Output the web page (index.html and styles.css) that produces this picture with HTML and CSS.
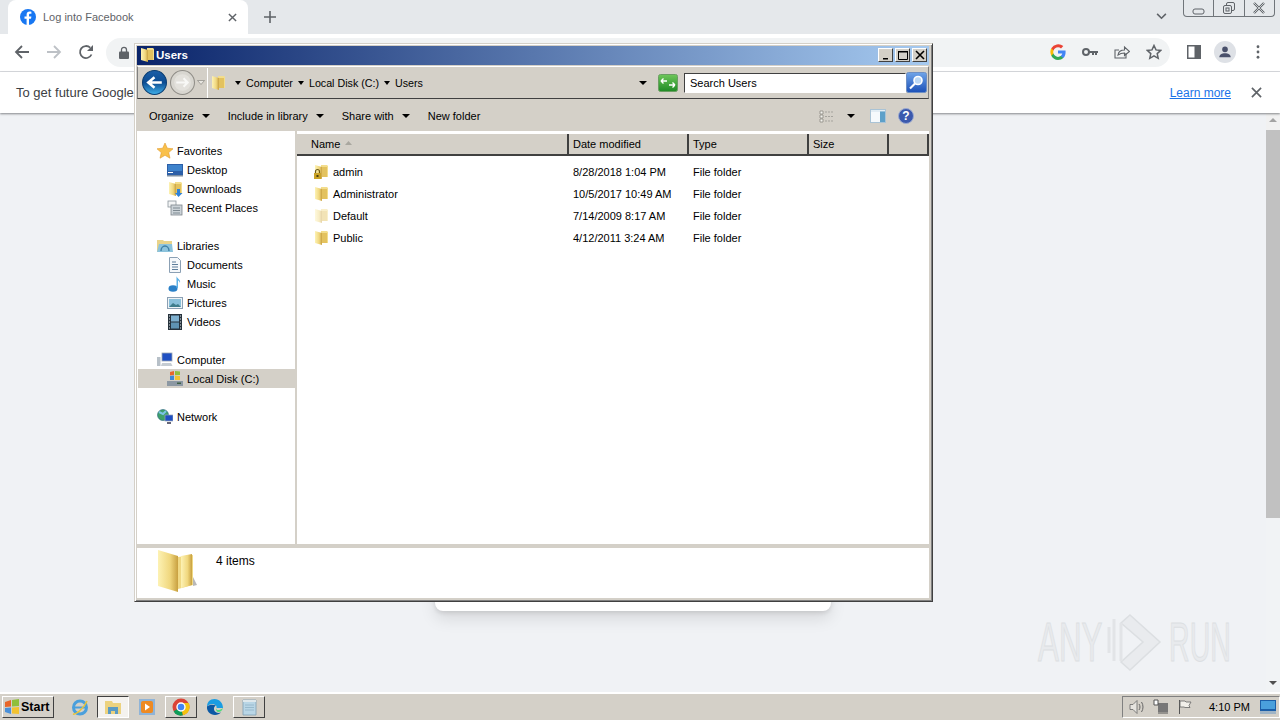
FILE: index.html
```html
<!DOCTYPE html>
<html lang="en">
<head>
    <meta charset="UTF-8">
    <title>Log into Facebook</title>
    <link rel="stylesheet" href="styles.css">
</head>
<body>
    <svg class="sprite" width="0" height="0">
        <defs>
            <linearGradient id="gFolder" x1="0" y1="0" x2="1" y2="0">
                <stop offset="0" stop-color="#fdf2b4"/>
                <stop offset="0.6" stop-color="#f0d77e"/>
                <stop offset="1" stop-color="#c8a040"/>
            </linearGradient>
            <linearGradient id="gTitle" x1="0" y1="0" x2="0" y2="1">
                <stop offset="0" stop-color="#1c5fa8"/>
                <stop offset="0.5" stop-color="#0c4c92"/>
                <stop offset="1" stop-color="#3fb0ea"/>
            </linearGradient>
            <linearGradient id="gGreen" x1="0" y1="0" x2="0" y2="1">
                <stop offset="0" stop-color="#6fc75a"/>
                <stop offset="1" stop-color="#1f8a25"/>
            </linearGradient>
            <linearGradient id="gSearch" x1="0" y1="0" x2="0" y2="1">
                <stop offset="0" stop-color="#6fa4e8"/>
                <stop offset="1" stop-color="#1b50b8"/>
            </linearGradient>
            <symbol id="folder" viewBox="0 0 16 16">
                <path d="M8 1h6l1 1v11H8z" fill="#f3dd8c"/>
                <path d="M9 3h5v10H9z" fill="#e3c25f"/>
                <path d="M2 1l7 2v12l-7-2z" fill="url(#gFolder)"/>
            </symbol>
            <symbol id="star" viewBox="0 0 16 16">
                <path d="M8 0l2.300 5.200 5.700.6-4.300 3.800 1.300 5.600L8 12.300 3 15.200l1.300-5.600L0 5.800l5.700-.6z" fill="#f9c04a" stroke="#e09a2c" stroke-width=".6"/>
            </symbol>
        </defs>
    </svg>

    <div class="browser">
        <div class="tabstrip">
            <div class="tab">
                <svg class="tab-fav" viewBox="0 0 16 16"><circle cx="8" cy="8" r="8" fill="#1877f2"/><path d="M9 16V9.800h2l.4-2.400H9V6c0-.8.3-1.200 1.200-1.200h1.200V2.700c-.4 0-1-.1-1.700-.1-1.900 0-3.100 1.100-3.100 3.200v1.600H4.500v2.400h2.100V16z" fill="#fff"/></svg>
                <span class="tab-title">Log into Facebook</span>
                <svg class="tab-close" viewBox="0 0 10 10"><path d="M1 1l8 8M9 1L1 9" stroke="#5f6368" stroke-width="1.600"/></svg>
            </div>
            <svg class="new-tab" viewBox="0 0 12 12"><path d="M6 0v12M0 6h12" stroke="#5f6368" stroke-width="1.600"/></svg>
            <svg class="tab-search" viewBox="0 0 12 8"><path d="M1 1l5 5 5-5" fill="none" stroke="#5f6368" stroke-width="1.800"/></svg>
            <div class="caption">
                <div class="caption-btn cap-min"><svg viewBox="0 0 14 8"><rect x="1" y="2" width="11" height="5" rx="2" fill="none" stroke="#5f6368"/></svg></div>
                <div class="caption-btn cap-max"><svg viewBox="0 0 14 14"><rect x="4.500" y="1.500" width="8" height="8" rx="1.500" fill="none" stroke="#5f6368"/><rect x="1.500" y="4.500" width="8" height="8" rx="1.500" fill="#e5e8eb" stroke="#5f6368"/><rect x="4" y="7" width="3" height="3" fill="none" stroke="#5f6368"/></svg></div>
                <div class="caption-btn"><svg viewBox="0 0 14 12"><path d="M2 1l10 10M12 1L2 11" stroke="#5f6368" stroke-width="2.400"/><path d="M2 1l10 10M12 1L2 11" stroke="#e5e8eb" stroke-width=".8"/></svg></div>
            </div>
        </div>

        <div class="toolbar">
            <svg class="nav-icon" viewBox="0 0 16 16"><path d="M15 8H2M8 2L2 8l6 6" fill="none" stroke="#5f6368" stroke-width="1.800"/></svg>
            <svg class="nav-icon" viewBox="0 0 16 16"><path d="M1 8h13M8 2l6 6-6 6" fill="none" stroke="#bdc1c6" stroke-width="1.800"/></svg>
            <svg class="nav-icon" viewBox="0 0 16 16"><path d="M13.500 10.500A6 6 0 1 1 12.200 3.700" fill="none" stroke="#5f6368" stroke-width="1.800"/><path d="M15 1v6H9z" fill="#5f6368"/></svg>
            <div class="omnibox">
                <svg class="lock" viewBox="0 0 10 13"><path d="M2.500 6V3.800a2.500 2.500 0 0 1 5 0V6" fill="none" stroke="#5f6368" stroke-width="1.300"/><rect y="5.500" width="10" height="7.500" rx="1" fill="#5f6368"/></svg>
                <div class="omni-actions">
                    <svg class="omni-icon" viewBox="0 0 16 16"><path d="M15.600 8.200c0-.6 0-1.100-.1-1.600H8v3h4.300a3.700 3.700 0 0 1-1.600 2.400v2h2.600c1.500-1.400 2.300-3.400 2.300-5.800z" fill="#4285f4"/><path d="M8 16c2.200 0 4-.7 5.300-1.900l-2.600-2c-.7.500-1.600.8-2.700.8-2.100 0-3.900-1.400-4.500-3.300H1.300v2.100A8 8 0 0 0 8 16z" fill="#34a853"/><path d="M3.500 9.600a4.800 4.800 0 0 1 0-3.100V4.300H1.300a8 8 0 0 0 0 7.400z" fill="#fbbc05"/><path d="M8 3.200c1.200 0 2.200.4 3 1.200l2.300-2.300A8 8 0 0 0 1.300 4.300l2.200 2.200C4.100 4.600 5.900 3.200 8 3.200z" fill="#ea4335"/></svg>
                    <svg class="omni-icon" viewBox="0 0 16 16"><circle cx="4" cy="8" r="3" fill="none" stroke="#5f6368" stroke-width="2"/><path d="M7 7h9v2h-1v2h-2V9h-1v2h-2V9H7z" fill="#5f6368"/></svg>
                    <svg class="omni-icon" viewBox="0 0 16 16"><path d="M12 9v5H1V6h4" fill="none" stroke="#5f6368" stroke-width="1.100"/><path d="M4 11c.5-3.500 3-5 6.500-5V3l5 4.500-5 4V9C8 9 6 9.500 4 11z" fill="none" stroke="#5f6368" stroke-width="1.100"/></svg>
                    <svg class="omni-icon" viewBox="0 0 16 16"><path d="M8 1.500l2 4.400 4.800.5-3.600 3.200 1 4.700L8 11.900l-4.200 2.400 1-4.700-3.600-3.200 4.800-.5z" fill="none" stroke="#5f6368" stroke-width="1.500"/></svg>
                </div>
            </div>
            <svg class="side-icon" viewBox="0 0 14 14"><path d="M0 0h14v14H0z" fill="#5f6368"/><path d="M1.500 1.500h6v11h-6z" fill="#fff"/></svg>
            <div class="avatar"><svg viewBox="0 0 16 16"><circle cx="8" cy="5" r="3.200" fill="#49506b"/><path d="M1.500 14c0-3 3-4.500 6.500-4.500s6.500 1.500 6.500 4.500z" fill="#49506b"/></svg></div>
            <svg class="menu-dots" viewBox="0 0 4 16"><circle cx="2" cy="2" r="1.600" fill="#5f6368"/><circle cx="2" cy="8" r="1.600" fill="#5f6368"/><circle cx="2" cy="14" r="1.600" fill="#5f6368"/></svg>
        </div>

        <div class="infobar">
            <span class="info-text">To get future Google</span>
            <a class="learn-more" href="#">Learn more</a>
            <svg class="info-close" viewBox="0 0 12 12"><path d="M1 1l10 10M11 1L1 11" stroke="#5f6368" stroke-width="1.800"/></svg>
        </div>

        <div class="page">
            <div class="page-main">
                <div class="login-card"></div>
            </div>
            <div class="scrollbar">
                <div class="scroll-up"></div>
                <div class="scroll-thumb"></div>
                <div class="scroll-down"></div>
            </div>
            <div class="watermark">
                <span class="wm-text">ANY</span>
                <svg class="wm-logo" viewBox="0 0 58 62"><path d="M8 8v42M3 16v26" fill="none" stroke="#e2e4e7" stroke-width="3"/><path d="M24 4l30 27-30 28-9-8 22-20-22-19z" fill="#e9ebee" stroke="#dcdfe2" stroke-width="1.500"/><path d="M15 12v38" stroke="#e2e4e7" stroke-width="3"/></svg>
                <span class="wm-text wm-run">RUN</span>
            </div>
        </div>
    </div>

    <div class="taskbar">
        <div class="start-btn">
            <svg class="start-logo" viewBox="0 0 16 16"><path d="M1 3l6-2v6.500L1 8z" fill="#e8662a"/><path d="M8 1l7-1v7l-7 .500z" fill="#8fbf3c"/><path d="M1 9l6-.5V15l-6-2z" fill="#4a90d9"/><path d="M8 8.500l7-.5v7l-7-.500z" fill="#f2c230"/></svg>
            <span>Start</span>
        </div>
        <svg class="task-icon ie" viewBox="0 0 18 18"><ellipse cx="9" cy="9.500" rx="6.500" ry="6.500" fill="none" stroke="#4a9fdc" stroke-width="3"/><path d="M3 9.500h12" stroke="#4a9fdc" stroke-width="2"/><path d="M2 16c3 1 11-6 14-13" fill="none" stroke="#e8c43a" stroke-width="1.600"/></svg>
        <div class="task-btn task-active">
            <svg class="task-icon" viewBox="0 0 18 18"><path d="M1 3h7l1 2h8v11H1z" fill="#ecd27e"/><path d="M4 9h10v7H11v-3H7v3H4z" fill="#5b9bc4"/></svg>
        </div>
        <svg class="task-icon wmp" viewBox="0 0 18 18"><rect x="1" y="1" width="16" height="16" fill="#8fb4d8"/><rect x="3" y="3" width="12" height="12" rx="2" fill="#ee8a22"/><path d="M7 5.500l5 3.500-5 3.500z" fill="#fff"/></svg>
        <div class="task-btn">
            <svg class="task-icon" viewBox="0 0 18 18"><circle cx="9" cy="9" r="8.500" fill="#db4437"/><path d="M9 9L1.600 13.300A8.500 8.500 0 0 0 11 17.300z" fill="#0f9d58"/><path d="M9 5h7.600a8.500 8.500 0 0 1-5.600 12.300L9 9z" fill="#f4c20d"/><circle cx="9" cy="9" r="4" fill="#4285f4" stroke="#fff" stroke-width="1.400"/></svg>
        </div>
        <svg class="task-icon edge" viewBox="0 0 18 18"><path d="M17 10c0-5-3.500-9-8.500-9C4 1 1 4 1 8.500c2-3 7-3.500 9-1 1 1.300.5 2.500.5 2.500z" fill="#1b9de2"/><path d="M1 8.500C.5 13 4 17 9 17c2.500 0 4.500-1 6-2.500-3 1-6.500 0-7-3-.3-2 .7-3.500 2-4-2.500-1.500-7-1-9 1z" fill="#0c59a4"/><path d="M10.500 10c-.5 2 2 3.500 6.500 0-1 3-3 4-4.500 4-2 0-3-2-2-4z" fill="#4fdb7a"/></svg>
        <div class="task-btn">
            <svg class="task-icon" viewBox="0 0 18 18"><path d="M3 2h13v15H3z" fill="#b9d6e6" stroke="#7d9fb3" stroke-width=".8"/><path d="M3 2h13v2H3z" fill="#dfe8ec"/><path d="M5 7h9M5 9.500h9M5 12h9" stroke="#8fb2c6" stroke-width=".8"/></svg>
        </div>
        <div class="tray">
            <svg class="tray-icon" viewBox="0 0 16 16"><path d="M1 5.500h3l4-4v13l-4-4H1z" fill="#e6e4df" stroke="#666" stroke-width=".8"/><path d="M10 5c1.300 2 1.300 4 0 6M12.500 3c2 3 2 7 0 10" fill="none" stroke="#666"/></svg>
            <svg class="tray-icon" viewBox="0 0 16 16"><rect x="5" y="4" width="10" height="9" fill="#777"/><path d="M1 1h4v5H1zM5 14h10" fill="#fff" stroke="#555"/></svg>
            <svg class="tray-icon" viewBox="0 0 16 16"><path d="M2.500 1v14" stroke="#555"/><path d="M3 2h5l1 1h5l-2 3.500 1 2H8L7 8H3z" fill="#f2f0ea" stroke="#666" stroke-width=".8"/></svg>
            <span class="clock">4:10 PM</span>
            <svg class="show-desktop" viewBox="0 0 16 14"><rect width="16" height="14" fill="#1c5fa8"/><rect x="1" y="1" width="14" height="8" fill="#4aa0dc"/><rect y="11" width="16" height="3" fill="#9fb4c6"/></svg>
        </div>
    </div>

    <div class="explorer">
        <div class="title-bar">
            <svg class="ico16" viewBox="0 0 16 16"><use href="#folder"/></svg>
            <span class="title-text">Users</span>
            <div class="win-btns">
                <div class="win-btn"><svg viewBox="0 0 10 10"><path d="M2 8h5v1.500H2z" fill="#000"/></svg></div>
                <div class="win-btn"><svg viewBox="0 0 10 10"><path d="M.5 1.500h9v8h-9z" fill="none" stroke="#000"/><path d="M0 1h10v1.500H0z" fill="#000"/></svg></div>
                <div class="win-btn win-close"><svg viewBox="0 0 10 10"><path d="M1 1l8 8M9 1L1 9" stroke="#000" stroke-width="1.600"/></svg></div>
            </div>
        </div>

        <div class="address-band">
            <svg class="round-btn" viewBox="0 0 24 24"><circle cx="12" cy="12" r="11.500" fill="url(#gTitle)" stroke="#0d3f73"/><path d="M19 12H8M12 7l-6 5 6 5" fill="none" stroke="#fff" stroke-width="2.400"/></svg>
            <svg class="round-btn fwd" viewBox="0 0 24 24"><circle cx="12" cy="12" r="11.500" fill="#d8d6d0" stroke="#8f8d87"/><circle cx="12" cy="12" r="8" fill="#e3e1dc"/><path d="M6 12h10M13 8l4 4-4 4" fill="none" stroke="#f8f8f6" stroke-width="2"/></svg>
            <svg class="hist-arrow" viewBox="0 0 8 5"><path d="M.5.500h7L4 4.500z" fill="#e8e6e1" stroke="#8a8882" stroke-width=".7"/></svg>
            <div class="address-box">
                <svg class="ico16" viewBox="0 0 16 16"><use href="#folder"/></svg>
                <span class="crumb-arrow"></span><span class="crumb">Computer</span>
                <span class="crumb-arrow"></span><span class="crumb">Local Disk (C:)</span>
                <span class="crumb-arrow"></span><span class="crumb">Users</span>
                <span class="drop-arrow address-drop"></span>
            </div>
            <svg class="refresh" viewBox="0 0 20 18"><rect x=".5" y=".5" width="19" height="17" rx="2" fill="url(#gGreen)" stroke="#6a9e62"/><path d="M3 7h6M3 7l2.500-2.500M3 7l2.500 2.500M17 11h-6M17 11l-2.500-2.500M17 11l-2.500 2.500" fill="none" stroke="#fff" stroke-width="1.400"/></svg>
            <div class="search-box">Search Users</div>
            <svg class="search-btn" viewBox="0 0 21 21"><rect x=".5" y=".5" width="20" height="20" rx="2" fill="url(#gSearch)" stroke="#6d8fc4"/><circle cx="12" cy="8.500" r="4" fill="#bcd8f5" stroke="#fff" stroke-width="1.600"/><path d="M9 11.500l-5 5" stroke="#fff" stroke-width="2.200"/></svg>
        </div>

        <div class="command-bar">
            <span class="cmd cmd-organize">Organize</span><span class="drop-arrow cmd-arrow"></span>
            <span class="cmd">Include in library</span><span class="drop-arrow cmd-arrow"></span>
            <span class="cmd">Share with</span><span class="drop-arrow cmd-arrow"></span>
            <span class="cmd">New folder</span>
            <div class="cmd-right">
                <svg class="view-icon" viewBox="0 0 16 13"><path d="M1 1h3v3H1zM1 5h3v3H1zM1 9h3v3H1z" fill="#f4f3ef" stroke="#8a8882" stroke-width=".8"/><path d="M6 2h9M6 6.500h9M6 11h9" stroke="#a5a39d" stroke-dasharray="2 1"/></svg>
                <span class="drop-arrow view-arrow"></span>
                <svg class="pane-icon" viewBox="0 0 16 14"><rect x=".5" y=".5" width="15" height="13" fill="#f5f9fc" stroke="#a9c3d6"/><rect x="10" y="2" width="5" height="11" fill="#5da0c9"/><path d="M1 2h14" stroke="#cfe0ec"/></svg>
                <svg class="help-icon" viewBox="0 0 16 16"><circle cx="8" cy="8" r="7.500" fill="#3b59ad" stroke="#9aa9d0"/><text class="help-mark" x="8" y="12" text-anchor="middle">?</text></svg>
            </div>
        </div>

        <div class="panes">
            <nav class="nav-pane">
                <div class="nav-row top"><svg class="ico16" viewBox="0 0 16 16"><use href="#star"/></svg>Favorites</div>
                <div class="nav-row sub"><svg class="ico16" viewBox="0 0 16 16"><rect y="2" width="16" height="11" fill="#2c5fa8"/><rect x="1" y="3" width="14" height="6" fill="#3e83cc"/><rect x="1" y="10" width="5" height="1" fill="#fff"/><rect y="13" width="16" height="1.500" fill="#7d8fa3"/></svg>Desktop</div>
                <div class="nav-row sub"><svg class="ico16" viewBox="0 0 16 16"><use href="#folder"/><path d="M10 8h3v4h2.500L11.500 16 8 12h2z" fill="#2f82d8"/></svg>Downloads</div>
                <div class="nav-row sub"><svg class="ico16" viewBox="0 0 16 16"><rect x="1" y="1" width="8" height="6" fill="#f4f5f6" stroke="#8b949c" stroke-width=".8"/><rect x="4" y="5" width="11" height="10" fill="#ccd3d8" stroke="#7d858c" stroke-width=".8"/><path d="M6 8h7M6 10.500h7M6 13h7" stroke="#7f8a92"/></svg>Recent Places</div>
                <div class="nav-gap"></div>
                <div class="nav-row top"><svg class="ico16" viewBox="0 0 16 16"><path d="M0 2h6l1 1h8v11H0z" fill="#e9d38a"/><path d="M2 6h13l1 8H0z" fill="#8cc3dc"/><path d="M4 13c0-3 2-5 4-5s4 2 4 5" fill="none" stroke="#3e7fa4" stroke-width="1.400"/></svg>Libraries</div>
                <div class="nav-row sub"><svg class="ico16" viewBox="0 0 16 16"><path d="M2.500.500h8l3 3v12h-11z" fill="#f5f8fb" stroke="#8ba0b4"/><path d="M5 5h4M5 7.500h6M5 10h6M5 12.500h6" stroke="#5d7d9b"/></svg>Documents</div>
                <div class="nav-row sub"><svg class="ico16" viewBox="0 0 16 16"><ellipse cx="6" cy="12.500" rx="4.500" ry="3.300" fill="#2a80c8"/><path d="M9.500 12V0c.5 2.500 4.500 3.500 3.500 7-.5-2-2-2.500-2-2.500V12z" fill="#5bb0e6"/></svg>Music</div>
                <div class="nav-row sub"><svg class="ico16" viewBox="0 0 16 16"><rect x=".5" y="2.500" width="15" height="11" fill="#eef3f6" stroke="#8ba0b4"/><rect x="2" y="4" width="12" height="8" fill="#8ac0da"/><path d="M2 12l4-4 3 2 2-1 3 3z" fill="#3f7d8c"/></svg>Pictures</div>
                <div class="nav-row sub"><svg class="ico16" viewBox="0 0 16 16"><rect x="1" y="0" width="14" height="16" fill="#26323c"/><rect x="4" y="1.500" width="8" height="6" fill="#7eb0cf"/><rect x="4" y="8.500" width="8" height="6" fill="#5f93b3"/><path d="M2 2h1M2 5h1M2 8h1M2 11h1M2 14h1M13 2h1M13 5h1M13 8h1M13 11h1M13 14h1" stroke="#dfe6ea"/></svg>Videos</div>
                <div class="nav-gap"></div>
                <div class="nav-row top"><svg class="ico16" viewBox="0 0 16 16"><rect x="5" y="1" width="10" height="8" fill="#1f4fc2" stroke="#9aa5b4" stroke-width=".8"/><rect y="5" width="3.500" height="9" fill="#b7c0c8"/><path d="M5 11h9l1.500 3H4z" fill="#c5ccd2"/></svg>Computer</div>
                <div class="nav-row sub selected"><svg class="ico16" viewBox="0 0 16 16"><path d="M0 10h16v5H0z" fill="#8c98a3"/><path d="M3 1l4-1v4l-4 .500z" fill="#e8662a"/><path d="M8 0l5 .5V4L8 4z" fill="#8fbf3c"/><path d="M3 5l4-.5V9H3z" fill="#3f86d4"/><path d="M8 4.500l5 .5v4H8z" fill="#f2c230"/><rect x="10" y="11.500" width="4" height="1.500" fill="#3c5f44"/></svg>Local Disk (C:)</div>
                <div class="nav-gap"></div>
                <div class="nav-row top"><svg class="ico16" viewBox="0 0 16 16"><circle cx="6" cy="6" r="5.500" fill="#3fa06a" stroke="#24627d" stroke-width=".6"/><path d="M2 3l4 2 3-3" fill="none" stroke="#7cc4e8" stroke-width="2"/><rect x="8" y="6" width="8" height="6" fill="#1f4fc2" stroke="#9aa5b4" stroke-width=".7"/><path d="M10 14h4" stroke="#667"  stroke-width="2"/></svg>Network</div>
            </nav>

            <div class="file-pane">
                <div class="col-head">
                    <div class="col col-name">Name<svg class="sort-mark" viewBox="0 0 7 4"><path d="M3.500 0L7 4H0z" fill="#a9a79f"/></svg></div>
                    <div class="col col-date">Date modified</div>
                    <div class="col col-type">Type</div>
                    <div class="col col-size">Size</div>
                    <div class="col col-rest"></div>
                </div>
                <div class="file-list">
                    <div class="file-row">
                        <div class="cell col-name"><span class="file-ico"><svg class="ico16" viewBox="0 0 16 16"><use href="#folder"/><rect x="1" y="9" width="7" height="6" fill="#c9a227"/><path d="M2.500 9V7.500a2 2 0 0 1 4 0V9" fill="none" stroke="#6b5a1a" stroke-width="1.200"/><rect x="3.500" y="11" width="2" height="2" fill="#4d3f10"/></svg></span>admin</div>
                        <div class="cell col-date">8/28/2018 1:04 PM</div>
                        <div class="cell col-type">File folder</div>
                    </div>
                    <div class="file-row">
                        <div class="cell col-name"><span class="file-ico"><svg class="ico16" viewBox="0 0 16 16"><use href="#folder"/></svg></span>Administrator</div>
                        <div class="cell col-date">10/5/2017 10:49 AM</div>
                        <div class="cell col-type">File folder</div>
                    </div>
                    <div class="file-row">
                        <div class="cell col-name"><span class="file-ico faded"><svg class="ico16" viewBox="0 0 16 16"><use href="#folder"/></svg></span>Default</div>
                        <div class="cell col-date">7/14/2009 8:17 AM</div>
                        <div class="cell col-type">File folder</div>
                    </div>
                    <div class="file-row">
                        <div class="cell col-name"><span class="file-ico"><svg class="ico16" viewBox="0 0 16 16"><use href="#folder"/></svg></span>Public</div>
                        <div class="cell col-date">4/12/2011 3:24 AM</div>
                        <div class="cell col-type">File folder</div>
                    </div>
                </div>
            </div>
        </div>

        <div class="status-bar">
            <svg class="status-folder" viewBox="0 0 40 42"><path d="M3 2l18 5 15-2v30l-15 4-18-5z" fill="#f0d985"/><path d="M24 6l11-2v31l-11 3z" fill="url(#gFolder)"/><path d="M1 0l20 6v36L1 36z" fill="url(#gFolder)"/><path d="M36 36l4-1-4-8z" fill="#b8b8b8"/></svg>
            <span class="status-text">4 items</span>
        </div>
    </div>
</body>
</html>
```

FILE: styles.css
```css
* {
    margin: 0;
    padding: 0;
    box-sizing: border-box;
}

body {
    font-family: "Liberation Sans", Arial, sans-serif;
    font-size: 11px;
    color: #000;
    width: 1280px;
    height: 720px;
    overflow: hidden;
    position: relative;
    display: flex;
    flex-direction: column;
}

.sprite {
    position: absolute;
}

/* chrome window */
.browser {
    height: 692px;
    display: flex;
    flex-direction: column;
}

.tabstrip {
    height: 34px;
    background-color: #e5e8eb;
    display: flex;
    align-items: flex-start;
    padding-left: 8px;
}

.tab {
    width: 240px;
    height: 34px;
    background-color: #fff;
    border-radius: 8px 8px 0 0;
    display: flex;
    align-items: center;
    padding: 0 11px 0 12px;
}

.tab-fav {
    width: 16px;
    height: 16px;
}

.tab-title {
    font-size: 11px;
    color: #5f6368;
    margin-left: 7px;
    flex: 1;
}

.tab-close {
    width: 9px;
    height: 9px;
}

.new-tab {
    width: 12px;
    height: 12px;
    margin: 11px 0 0 16px;
}

.tab-search {
    width: 11px;
    height: 7px;
    margin: 13px 0 0 880px;
}

.caption {
    height: 17px;
    width: 92px;
    margin-left: 16px;
    border: 1px solid #70757a;
    border-top: none;
    border-radius: 0 0 4px 4px;
    display: flex;
}

.caption-btn {
    flex: 1;
    display: flex;
    align-items: center;
    justify-content: center;
    border-left: 1px solid #70757a;
}

.caption-btn:first-child {
    border-left: none;
}

.caption-btn svg {
    width: 14px;
    height: 14px;
}

.cap-min svg {
    height: 8px;
    margin-top: 5px;
}

.toolbar {
    height: 38px;
    background-color: #fff;
    border-bottom: 1px solid #dadce0;
    display: flex;
    align-items: center;
    padding: 0 0 1px 14px;
}

.nav-icon {
    width: 16px;
    height: 16px;
    margin-right: 16px;
}

.omnibox {
    width: 1064px;
    height: 29px;
    margin-left: -4px;
    background-color: #f1f3f4;
    border-radius: 15px;
    display: flex;
    align-items: center;
    padding-left: 13px;
}

.lock {
    width: 10px;
    height: 13px;
}

.omni-actions {
    margin-left: auto;
    display: flex;
    gap: 16px;
    padding-right: 8px;
}

.omni-icon {
    width: 16px;
    height: 16px;
}

.side-icon {
    width: 14px;
    height: 14px;
    margin-left: 17px;
}

.avatar {
    width: 22px;
    height: 22px;
    border-radius: 50%;
    background-color: #dee1e6;
    margin-left: 13px;
    display: flex;
    align-items: center;
    justify-content: center;
}

.avatar svg {
    width: 14px;
    height: 14px;
}

.menu-dots {
    width: 4px;
    height: 14px;
    margin-left: 20px;
}

.infobar {
    height: 41px;
    background-color: #fff;
    box-shadow: 0 1px 2px rgba(60, 64, 67, 0.6);
    display: flex;
    align-items: center;
    padding: 0 18px 0 16px;
    position: relative;
    z-index: 1;
    font-size: 13px;
}

.info-text {
    color: #3c4043;
    flex: 1;
}

.learn-more {
    color: #1a73e8;
    text-decoration: underline;
    font-size: 12px;
    margin-right: 20px;
}

.info-close {
    width: 11px;
    height: 11px;
}

.page {
    flex: 1;
    background-color: #f0f2f5;
    display: flex;
    position: relative;
}

.page-main {
    flex: 1;
    display: flex;
    justify-content: center;
    align-items: flex-start;
    padding-top: 40px;
}

.login-card {
    width: 396px;
    height: 458px;
    background-color: #fff;
    border-radius: 8px;
    box-shadow: 0 2px 4px rgba(0, 0, 0, 0.1), 0 8px 16px rgba(0, 0, 0, 0.1);
}

.scrollbar {
    width: 14px;
    display: flex;
    flex-direction: column;
    background-color: #f1f3f5;
}

.scroll-up {
    height: 17px;
    background-color: #f1f1f1;
    position: relative;
}

.scroll-up::after {
    content: "";
    position: absolute;
    left: 3px;
    top: 5px;
    border-left: 4px solid transparent;
    border-right: 4px solid transparent;
    border-bottom: 4px solid #a3a3a3;
}

.scroll-thumb {
    height: 388px;
    background-color: #c1c1c1;
}

.scroll-down {
    margin-top: auto;
    height: 17px;
    position: relative;
}

.scroll-down::after {
    content: "";
    position: absolute;
    left: 3px;
    top: 6px;
    border-left: 4px solid transparent;
    border-right: 4px solid transparent;
    border-top: 4px solid #505050;
}

.watermark {
    position: absolute;
    left: 1038px;
    top: 498px;
    display: flex;
    align-items: center;
    gap: 5px;
    height: 62px;
}

.wm-text {
    width: 63px;
    font-size: 56px;
    line-height: 62px;
    color: #e8eaed;
    -webkit-text-stroke: 1px #dcdfe2;
    transform: scaleX(0.56);
    transform-origin: left center;
    white-space: nowrap;
}

.wm-run {
    transform: scaleX(0.51);
}

.wm-logo {
    width: 58px;
    height: 62px;
}

/* windows taskbar */
.taskbar {
    height: 28px;
    background-color: #d4d0c8;
    border-top: 2px solid #fff;
    display: flex;
    align-items: center;
}

.start-btn {
    width: 52px;
    height: 22px;
    margin-left: 2px;
    background-color: #d4d0c8;
    border: 1px solid;
    border-color: #fff #404040 #404040 #fff;
    display: flex;
    align-items: center;
    gap: 1px;
    padding-left: 1px;
    font-size: 12.500px;
    font-weight: bold;
}

.start-logo {
    width: 16px;
    height: 16px;
}

.task-icon {
    width: 18px;
    height: 18px;
    flex: none;
}

.ie {
    margin-left: 17px;
}

.wmp {
    margin-left: 9px;
}

.edge {
    margin-left: 9px;
}

.task-btn {
    width: 32px;
    height: 22px;
    margin-left: 9px;
    border: 1px solid;
    border-color: #fff #404040 #404040 #fff;
    display: flex;
    align-items: center;
    justify-content: center;
}

.task-btn.task-active {
    margin-left: 8px;
    background-color: #f4f2ee;
    border-color: #404040 #fff #fff #404040;
}

.tray {
    margin-left: auto;
    width: 158px;
    height: 22px;
    border: 1px solid;
    border-color: #808080 #fff #fff #808080;
    display: flex;
    align-items: center;
    padding-left: 6px;
}

.tray-icon {
    width: 16px;
    height: 16px;
    margin-right: 8px;
}

.clock {
    margin-left: 8px;
    width: 51px;
    font-size: 11px;
}

.show-desktop {
    width: 16px;
    height: 14px;
}

/* explorer window, floats over the browser */
.explorer {
    position: absolute;
    z-index: 2;
    left: 134px;
    top: 43px;
    width: 799px;
    height: 559px;
    background-color: #d4d0c8;
    border: 1px solid;
    border-color: #d4d0c8 #404040 #404040 #d4d0c8;
    box-shadow: inset 1px 1px 0 #fff, inset -1px -1px 0 #808080;
    padding: 2px 3px 3px 2px;
    display: flex;
    flex-direction: column;
}

.ico16 {
    width: 16px;
    height: 16px;
    flex: none;
}

.title-bar {
    height: 19px;
    background: linear-gradient(to right, #0a246a, #a6caf0);
    display: flex;
    align-items: center;
    padding: 0 0 1px 2px;
    gap: 1px;
    flex: none;
}

.title-text {
    color: #fff;
    font-weight: bold;
    font-size: 11.500px;
}

.win-btns {
    margin-left: auto;
    display: flex;
    padding-right: 2px;
}

.win-btn {
    width: 15px;
    height: 14px;
    margin-left: 2px;
    background-color: #d4d0c8;
    border: 1px solid;
    border-color: #fff #404040 #404040 #fff;
    display: flex;
    align-items: center;
    justify-content: center;
}

.win-btn svg {
    width: 10px;
    height: 10px;
}

.address-band {
    height: 33px;
    flex: none;
    margin-top: 1px;
    border: 1px solid;
    border-color: #fff #808080 #404040 #808080;
    display: flex;
    align-items: center;
    padding-left: 4px;
}

.round-btn {
    width: 25px;
    height: 25px;
    flex: none;
}

.round-btn.fwd {
    margin-left: 3px;
}

.hist-arrow {
    width: 8px;
    height: 5px;
    margin-left: 2px;
}

.address-box {
    width: 448px;
    height: 30px;
    margin-left: 2px;
    padding-left: 2px;
    border-left: 1px solid #fff;
    display: flex;
    align-items: center;
    font-size: 10.700px;
}

.crumb-arrow {
    width: 0;
    height: 0;
    margin: 1px 3px 0 9px;
    border-left: 3px solid transparent;
    border-right: 3px solid transparent;
    border-top: 4px solid #000;
}

.crumb-arrow + .crumb {
    margin-left: 2px;
}

.crumb + .crumb-arrow {
    margin-left: 5px;
}

.drop-arrow {
    width: 0;
    height: 0;
    border-left: 4px solid transparent;
    border-right: 4px solid transparent;
    border-top: 4px solid #000;
}

.address-drop {
    margin-left: auto;
    margin-right: 8px;
}

.refresh {
    width: 20px;
    height: 18px;
    margin-left: 3px;
}

.search-box {
    width: 222px;
    height: 20px;
    margin-left: 6px;
    background-color: #fff;
    border: 1px solid;
    border-color: #404040 #fff #fff #404040;
    padding: 3px 0 0 5px;
    font-size: 11px;
}

.search-btn {
    width: 21px;
    height: 21px;
}

.command-bar {
    height: 32px;
    flex: none;
    display: flex;
    align-items: center;
    padding: 2px 0 0 12px;
    font-size: 11px;
}

.cmd-arrow {
    margin: 0 18px 0 8px;
}

.cmd-right {
    margin-left: auto;
    display: flex;
    align-items: center;
    padding-right: 15px;
}

.view-icon {
    width: 16px;
    height: 13px;
}

.view-arrow {
    margin-left: 12px;
}

.pane-icon {
    width: 16px;
    height: 14px;
    margin-left: 15px;
}

.help-icon {
    width: 16px;
    height: 16px;
    margin-left: 12px;
}

.help-mark {
    fill: #fff;
    font-size: 12px;
    font-weight: bold;
    font-family: "Liberation Sans", Arial, sans-serif;
}

.panes {
    flex: 1;
    display: flex;
    min-height: 0;
    gap: 2px;
}

.nav-pane {
    width: 158px;
    background-color: #fff;
    padding-top: 10px;
    font-size: 11px;
}

.nav-row {
    height: 19px;
    display: flex;
    align-items: center;
    gap: 4px;
}

.nav-row.top {
    padding-left: 20px;
}

.nav-row.sub {
    padding-left: 30px;
}

.nav-row.selected {
    background-color: #d4d0c8;
    margin-left: 1px;
    padding-left: 29px;
}

.nav-gap {
    height: 19px;
}

.file-pane {
    flex: 1;
    background-color: #fff;
    display: flex;
    flex-direction: column;
}

.col-head {
    height: 22px;
    margin-top: 3px;
    background-color: #d4d0c8;
    border-bottom: 2px solid #404040;
    display: flex;
    flex: none;
    font-size: 11px;
}

.col {
    display: flex;
    align-items: center;
    padding-left: 4px;
    border-right: 2px solid #404040;
}

.col-name {
    width: 272px;
}

.col-head .col-name {
    padding-left: 14px;
}

.col-date {
    width: 120px;
}

.col-type {
    width: 120px;
}

.col-size {
    width: 80px;
}

.col-rest {
    flex: 1;
}

.sort-mark {
    width: 7px;
    height: 4px;
    margin: 0 0 3px 5px;
}

.file-list {
    padding-top: 5px;
    font-size: 11px;
}

.file-row {
    height: 22px;
    display: flex;
    align-items: center;
}

.cell {
    display: flex;
    align-items: center;
    padding-left: 4px;
}

.cell.col-name {
    padding-left: 16px;
}

.file-ico {
    display: flex;
    margin-right: 4px;
}

.file-ico.faded {
    opacity: 0.45;
}

.status-bar {
    height: 50px;
    flex: none;
    margin-top: 4px;
    background-color: #fff;
    display: flex;
    align-items: flex-start;
    padding-left: 20px;
    font-size: 12px;
}

.status-folder {
    width: 40px;
    height: 42px;
    margin-top: 2px;
}

.status-text {
    margin: 6px 0 0 19px;
}
```
